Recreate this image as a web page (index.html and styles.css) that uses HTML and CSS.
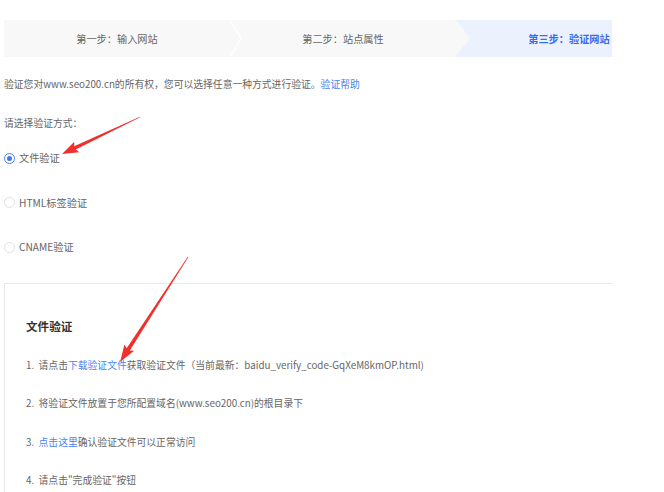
FILE: index.html
```html
<!DOCTYPE html>
<html lang="zh-CN">
<head>
<meta charset="utf-8">
<title>验证网站</title>
<link rel="stylesheet" href="styles.css">
</head>
<body>
<div class="page">
  <div class="steps">
    <div class="step step-done">第一步：输入网站
      <svg class="chev" width="14" height="37" viewBox="0 0 14 37"><polyline points="1,0 12,18.5 1,37" fill="none" stroke="#ffffff" stroke-width="1.2"/></svg>
    </div>
    <div class="step step-prev">第二步：站点属性</div>
    <div class="step step-active">第三步：验证网站</div>
  </div>

  <p class="intro">验证您对www.seo200.cn的所有权，您可以选择任意一种方式进行验证。<a class="link" href="#">验证帮助</a></p>
  <p class="prompt">请选择验证方式：</p>

  <div class="radios">
    <label class="radio"><span class="dot dot-on"></span>文件验证</label>
    <label class="radio"><span class="dot"></span>HTML标签验证</label>
    <label class="radio"><span class="dot"></span>CNAME验证</label>
  </div>

  <div class="panel">
    <h3 class="panel-title">文件验证</h3>
    <ol class="steps-list">
      <li>1.&nbsp; 请点击<a class="link" href="#">下载验证文件</a>获取验证文件（当前最新：baidu_verify_code-GqXeM8kmOP.html)</li>
      <li>2.&nbsp; 将验证文件放置于您所配置域名(www.seo200.cn)的根目录下</li>
      <li>3.&nbsp; <a class="link" href="#">点击这里</a>确认验证文件可以正常访问</li>
      <li>4.&nbsp; 请点击"完成验证"按钮</li>
    </ol>
  </div>
</div>

<svg class="annot" width="664" height="492" viewBox="0 0 664 492">
  <g transform="translate(140,117) rotate(154.6)" fill="#f0302c">
    <polygon points="0,-0.3 72,-1.8 70,-5.8 86.3,0 70,5.8 72,1.8 0,0.3"/>
  </g>
  <g transform="translate(188,257) rotate(122.9)" fill="#f0302c">
    <polygon points="0,-0.3 110,-1.9 108,-5.8 125.1,0 108,5.8 110,1.9 0,0.3"/>
  </g>
</svg>
</body>
</html>
```

FILE: styles.css
```css
html, body {
  margin: 0;
  padding: 0;
  background: #ffffff;
}

body {
  font-family: "Noto Sans CJK SC", "Microsoft YaHei", sans-serif;
  font-size: 9.8px;
  color: #666666;
  position: relative;
  width: 664px;
  height: 492px;
  overflow: hidden;
}

.page {
  width: 608px;
  padding: 20px 0 0 4px;
  overflow: hidden;
}

.steps {
  display: flex;
  width: 700px;
  height: 37px;
}

.step {
  position: relative;
  flex: 0 0 226px;
  display: flex;
  align-items: center;
  justify-content: center;
  background: #f8f8f8;
  font-size: 10.2px;
  color: #666666;
}

.chev {
  position: absolute;
  right: -13px;
  top: 0;
  z-index: 2;
}

.step-prev::after {
  content: "";
  position: absolute;
  right: -14px;
  top: 0;
  border-left: 14px solid #f8f8f8;
  border-top: 18.5px solid transparent;
  border-bottom: 18.5px solid transparent;
  z-index: 2;
}

.step-active {
  background: #ebf2fe;
  color: #3a6cf0;
  font-weight: bold;
}

.intro {
  margin: 17px 0 0;
  line-height: 20px;
}

.prompt {
  margin: 19px 0 0;
  line-height: 20px;
}

.radios {
  display: flex;
  flex-direction: column;
  gap: 24.5px;
  margin-top: 15px;
}

.radio {
  display: flex;
  align-items: center;
  gap: 4px;
  height: 20px;
  line-height: 20px;
  font-size: 10.2px;
}

.dot {
  box-sizing: border-box;
  width: 11px;
  height: 11px;
  border-radius: 50%;
  border: 1px solid #e0e0e0;
  background: #ffffff;
  display: flex;
  align-items: center;
  justify-content: center;
}

.dot-on {
  border-color: #4a82f2;
}

.dot-on::after {
  content: "";
  width: 5px;
  height: 5px;
  border-radius: 50%;
  background: #3f78f0;
}

.link {
  color: #4a84f5;
  text-decoration: none;
}

.panel {
  margin-top: 26px;
  width: 680px;
  height: 240px;
  border: 1px solid #e8e8e8;
  padding: 32px 0 0 21px;
}

.panel-title {
  margin: 0;
  font-size: 11.6px;
  line-height: 20px;
  font-weight: bold;
  color: #333333;
}

.steps-list {
  list-style: none;
  margin: 19px 0 0;
  padding: 0;
  display: flex;
  flex-direction: column;
  gap: 18.3px;
}

.steps-list li {
  line-height: 20px;
  white-space: nowrap;
}

.annot {
  position: absolute;
  left: 0;
  top: 0;
  pointer-events: none;
}
```
